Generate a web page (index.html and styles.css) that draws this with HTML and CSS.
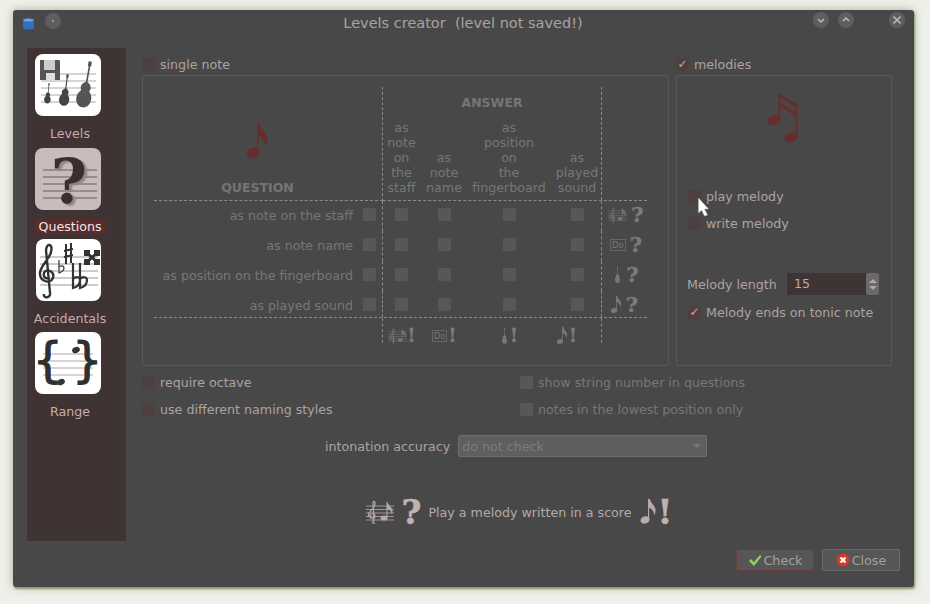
FILE: index.html
```html
<!DOCTYPE html>
<html>
<head>
  <meta charset="UTF-8">
  <title>Levels creator</title>
  <link rel="stylesheet" href="styles.css">
</head>
<body>
  <!-- Shared music symbols -->
  <svg class="defs" width="0" height="0">
    <symbol id="note" viewBox="0 0 22 36">
      <ellipse cx="7" cy="29" rx="6.5" ry="5" transform="rotate(-20 7 29)"/>
      <path d="M11 28V0h2.5c1 6 8 9 8 16 0 3-1 5-2 6 0-5-3-8-7-10V28z"/>
    </symbol>
    <symbol id="beam" viewBox="0 0 32 52">
      <ellipse cx="7" cy="28" rx="7" ry="5" transform="rotate(-20 7 28)"/>
      <ellipse cx="24" cy="46" rx="7" ry="5" transform="rotate(-20 24 46)"/>
      <path d="M11 27V0l20 12v33h-2V24L13 14v13zM13 5v5l16 10v-5z"/>
    </symbol>
    <symbol id="score" viewBox="0 0 28 24">
      <path d="M0 6h28M0 9.500h28M0 13h28M0 16.500h28M0 20h28" stroke="currentColor" stroke-width=".8" fill="none"/>
      <path d="M9 23c-3 1-3-2-1-2M8 21L7 2c2-2 3 2 1 5L3 13c-2 4 4 7 6 4 1-3-4-5-5-1" stroke="currentColor" stroke-width="1.200" fill="none"/>
      <ellipse cx="18" cy="18" rx="3.500" ry="2.500"/>
      <path d="M20.500 18V2h1c1 4 5 5 5 9 0 2-.5 3-1 3 0-3-2-5-4-5v9z"/>
    </symbol>
    <symbol id="guitar" viewBox="0 0 12 30">
      <path d="M5 0h2v3h-.5v9.500c1.500 1 2.500 2 2.500 3.500 0 1-.5 1.500-.5 2 1 1 2 2.500 2 4.500C10.500 26 8.500 28 6 28s-4.500-2-4.500-5.500c0-2 1-3.500 2-4.500 0-.5-.5-1-.5-2 0-1.500 1-2.500 2.500-3.500V3H5z"/>
    </symbol>
  </svg>

  <div class="window">
    <div class="titlebar">
      <div class="title-left">
        <svg class="app-icon" viewBox="0 0 11 12"><path d="M0 2c0-2 11-2 11 0v8c0 2-11 2-11 0z" fill="#2f6fc4"/><ellipse cx="5.500" cy="2" rx="5" ry="1.500" fill="#6aa3e6"/></svg>
        <span class="round-btn menu-btn"><i class="dot"></i></span>
      </div>
      <div class="title">Levels creator&nbsp; (level not saved!)</div>
      <div class="title-right">
        <span class="round-btn"><svg viewBox="0 0 16 16"><path d="M5 7l3 3 3-3" /></svg></span>
        <span class="round-btn"><svg viewBox="0 0 16 16"><path d="M5 9l3-3 3 3" /></svg></span>
        <span class="round-btn close-btn"><svg viewBox="0 0 16 16"><path d="M4.500 4.500l7 7M11.500 4.500l-7 7" /></svg></span>
      </div>
    </div>

    <div class="content">
      <!-- Navigation -->
      <div class="sidebar">
        <div class="nav-item">
          <div class="nav-card">
            <svg class="nav-icon" viewBox="0 0 66 62">
              <rect width="66" height="62" rx="8" fill="#fff"/>
              <path d="M6 20h55M6 27h55M6 34h55M6 41h55M6 48h55" stroke="#aaa" fill="none"/>
              <path d="M5 6h19l1 1v19H5z" fill="#555"/>
              <rect x="9" y="6" width="11" height="10" fill="#ccc"/>
              <rect x="11" y="19" width="9" height="7" fill="#ddd"/>
              <g transform="rotate(6 13 40)"><use href="#guitar" x="7" y="29" width="12" height="22" fill="#444"/></g>
              <g transform="rotate(8 30 36)"><use href="#guitar" x="22" y="20" width="17" height="34" fill="#444"/></g>
              <g transform="rotate(10 51 32)"><use href="#guitar" x="39" y="7" width="24" height="50" fill="#555"/></g>
            </svg>
          </div>
          <span class="nav-label">Levels</span>
        </div>
        <div class="nav-item active">
          <div class="nav-card">
            <svg class="nav-icon" viewBox="0 0 66 62">
              <rect width="66" height="62" rx="8" fill="#c9bcbc"/>
              <path d="M8 22h54M8 29h54M8 36h54M8 43h54M8 50h54" stroke="#6b5f5f" fill="none"/>
            </svg>
            <span class="nav-q">?</span>
          </div>
          <span class="nav-label">Questions</span>
        </div>
        <div class="nav-item">
          <div class="nav-card">
            <svg class="nav-icon" viewBox="0 0 66 62">
              <rect x="1" width="65" height="62" rx="8" fill="#fff"/>
              <path d="M5 18h58M5 25h58M5 32h58M5 39h58M5 46h58" stroke="#999" fill="none"/>
              <!-- clef -->
              <path d="M15 54c1 5-7 6-6 1M15 54L11 11c1-8 7-6 5 2-1 6-9 12-11 20-1 9 10 13 13 6 2-7-7-10-9-5-1 4 2 6 4 5" stroke="#333" stroke-width="2.400" fill="none"/>
              <!-- flat, sharp, double flat -->
              <path d="M24 21v13c3-1 5-3 5-5 0-2-3-3-5-1" stroke="#444" stroke-width="1.300" fill="none"/>
              <path d="M31 5v20M36 4v20M29 12l9-2M29 18l9-2" stroke="#333" stroke-width="2" fill="none"/>
              <path d="M38 24v25c4-1 7-4 7-8 0-3-4-4-7-1M45 24v25c4-1 7-4 7-8 0-3-4-4-7-1" stroke="#333" stroke-width="2.200" fill="none"/>
              <!-- double sharp -->
              <path d="M52 14l10 9M62 14l-10 9" stroke="#333" stroke-width="3" fill="none"/>
              <path d="M49 11h6v6h-6zM59 11h6v6h-6zM49 20h6v6h-6zM59 20h6v6h-6z" fill="#333"/>
            </svg>
          </div>
          <span class="nav-label">Accidentals</span>
        </div>
        <div class="nav-item">
          <div class="nav-card">
            <svg class="nav-icon" viewBox="0 0 66 62">
              <rect width="66" height="62" rx="8" fill="#fff"/>
              <path d="M8 22h50M8 29h50M8 36h50M8 43h50" stroke="#aaa" fill="none"/>
              <ellipse cx="41" cy="18" rx="4" ry="3" fill="#333" transform="rotate(-25 41 18)"/>
              <ellipse cx="26" cy="50" rx="4" ry="3" fill="#333" transform="rotate(-25 26 50)"/>
            </svg>
            <span class="brace brace-l">{</span>
            <span class="brace brace-r">}</span>
          </div>
          <span class="nav-label">Range</span>
        </div>
      </div>

      <div class="main">
        <div class="top-row">
          <!-- Single note -->
          <div class="single-col">
            <label class="check head-check"><i class="box"></i>single note</label>
            <div class="group single-group">
              <div class="qa-table">
                <div class="q-head">
                  <svg class="red-note"><use href="#note"/></svg>
                  <b class="head-title">QUESTION</b>
                </div>
                <div class="a-head">
                  <b class="head-title answer-title">ANSWER</b>
                  <div class="a-cols">
                    <span class="a-col c1">as<br>note<br>on<br>the<br>staff</span>
                    <span class="a-col c2">as<br>note<br>name</span>
                    <span class="a-col c3">as<br>position<br>on<br>the<br>fingerboard</span>
                    <span class="a-col c4">as<br>played<br>sound</span>
                  </div>
                </div>

                <div class="qa-row">
                  <span class="row-label">as note on the staff</span>
                  <i class="box off q-box"></i>
                  <span class="cell c1"><i class="box off"></i></span>
                  <span class="cell c2"><i class="box off"></i></span>
                  <span class="cell c3"><i class="box off"></i></span>
                  <span class="cell c4"><i class="box off"></i></span>
                  <span class="row-icon"><svg class="i-score"><use href="#score"/></svg><b class="mark">?</b></span>
                </div>
                <div class="qa-row">
                  <span class="row-label">as note name</span>
                  <i class="box off q-box"></i>
                  <span class="cell c1"><i class="box off"></i></span>
                  <span class="cell c2"><i class="box off"></i></span>
                  <span class="cell c3"><i class="box off"></i></span>
                  <span class="cell c4"><i class="box off"></i></span>
                  <span class="row-icon"><span class="do">Do</span><b class="mark">?</b></span>
                </div>
                <div class="qa-row">
                  <span class="row-label">as position on the fingerboard</span>
                  <i class="box off q-box"></i>
                  <span class="cell c1"><i class="box off"></i></span>
                  <span class="cell c2"><i class="box off"></i></span>
                  <span class="cell c3"><i class="box off"></i></span>
                  <span class="cell c4"><i class="box off"></i></span>
                  <span class="row-icon"><svg class="i-guitar"><use href="#guitar"/></svg><b class="mark">?</b></span>
                </div>
                <div class="qa-row last-row">
                  <span class="row-label">as played sound</span>
                  <i class="box off q-box"></i>
                  <span class="cell c1"><i class="box off"></i></span>
                  <span class="cell c2"><i class="box off"></i></span>
                  <span class="cell c3"><i class="box off"></i></span>
                  <span class="cell c4"><i class="box off"></i></span>
                  <span class="row-icon sound-icon"><svg class="i-note"><use href="#note"/></svg><b class="mark">?</b></span>
                </div>

                <div class="qa-foot">
                  <span class="cell c1"><svg class="i-score"><use href="#score"/></svg><b class="mark small">!</b></span>
                  <span class="cell c2"><span class="do">Do</span><b class="mark small">!</b></span>
                  <span class="cell c3"><svg class="i-guitar"><use href="#guitar"/></svg><b class="mark small">!</b></span>
                  <span class="cell c4"><svg class="i-note"><use href="#note"/></svg><b class="mark small">!</b></span>
                </div>
              </div>
            </div>
          </div>

          <!-- Melodies -->
          <div class="melody-col">
            <label class="check head-check"><i class="box"><em>✓</em></i>melodies</label>
            <div class="group melody-group">
              <svg class="red-beam"><use href="#beam"/></svg>
              <label class="check play"><i class="box"></i>play melody</label>
              <label class="check write"><i class="box"></i>write melody</label>
              <div class="length-row">
                <span>Melody length</span>
                <div class="spin">
                  <span class="spin-val">15</span>
                  <span class="spin-btns"><i class="up"></i><i class="down"></i></span>
                </div>
              </div>
              <label class="check ends"><i class="box"><em>✓</em></i>Melody ends on tonic note</label>
            </div>
          </div>
        </div>

        <div class="options">
          <label class="check"><i class="box"></i>require octave</label>
          <label class="check disabled"><i class="box off"></i>show string number in questions</label>
          <label class="check"><i class="box"></i>use different naming styles</label>
          <label class="check disabled"><i class="box off"></i>notes in the lowest position only</label>
        </div>

        <div class="accuracy">
          <span>intonation accuracy</span>
          <div class="combo"><span>do not check</span><i class="combo-arrow"></i></div>
        </div>

        <div class="summary">
          <svg class="sum-score"><use href="#score"/></svg>
          <b class="sum-mark q">?</b>
          <span class="sum-text">Play a melody written in a score</span>
          <svg class="sum-note"><use href="#note"/></svg>
          <b class="sum-mark ex">!</b>
        </div>

        <div class="buttons">
          <button class="btn default">
            <svg viewBox="0 0 14 14"><path d="M1 8l2-2 3 3 6-7 1.500 1.500L6 13z" fill="#8fcf5a"/></svg>Check
          </button>
          <button class="btn">
            <svg viewBox="0 0 14 14"><circle cx="7" cy="7" r="6.500" fill="#d33a2c"/><path d="M4.500 4.500l5 5M9.500 4.500l-5 5" stroke="#fff" stroke-width="2.200"/></svg>Close
          </button>
        </div>
      </div>
    </div>
  </div>

  <!-- Mouse pointer over the window -->
  <svg class="cursor" viewBox="0 0 12 20"><path d="M1 1v15l3-3 3 6 3-1-3-6h4z" fill="#fff" stroke="#bbb" stroke-width=".5"/></svg>
</body>
</html>
```

FILE: styles.css
```css
/* Dark window on a pale desktop */
body {
  margin: 0;
  height: 604px;
  box-sizing: border-box;
  padding: 10px 16px 17px 13px;
  background-color: #eef0ea;
  font-family: "DejaVu Sans", sans-serif;
  font-size: 12.650px;
  color: #aea2a2;
  overflow: hidden;
}
i, em, b {
  font-style: normal;
}
.defs {
  position: absolute;
}
.window {
  height: 577px;
  background-color: #484848;
  border-radius: 3px;
  box-shadow: 1px 2px 2px #8d9a70, 0 0 10px #a9b596;
}

/* Title bar */
.titlebar {
  height: 38px;
  display: flex;
  align-items: flex-start;
  padding-top: 2px;
  box-sizing: border-box;
  position: relative;
}
.title-left {
  display: flex;
  align-items: center;
  padding-left: 10px;
  gap: 11px;
}
.app-icon {
  width: 11px;
  height: 12px;
  margin-top: 6px;
}
.round-btn {
  width: 16px;
  height: 16px;
  border-radius: 50%;
  background-color: #5e5e5e;
  display: block;
}
.round-btn svg {
  display: block;
  fill: none;
  stroke: #c4b8b8;
  stroke-width: 1.500;
}
.menu-btn {
  display: flex;
  align-items: center;
  justify-content: center;
}
.dot {
  width: 2px;
  height: 2px;
  background-color: #999;
}
.title {
  flex: 1;
  text-align: center;
  font-size: 14.500px;
  line-height: 18px;
  color: #aaa2a2;
  padding: 2px 0 0 52px;
}
.title-right {
  display: flex;
  gap: 9px;
  padding-right: 9px;
}
.close-btn {
  margin-left: 26px;
}

/* Layout below the title bar */
.content {
  display: flex;
  padding-left: 14px;
}
.sidebar {
  width: 99px;
  height: 493px;
  flex-shrink: 0;
  background-color: #3f3333;
  padding-top: 6px;
  box-sizing: border-box;
  display: flex;
  flex-direction: column;
  gap: 5px;
  align-items: flex-start;
}
.nav-item {
  width: 86px;
  display: flex;
  flex-direction: column;
  align-items: center;
}
.nav-card {
  position: relative;
  width: 66px;
  height: 62px;
  margin-right: 5px;
}
.nav-icon {
  width: 66px;
  height: 62px;
  display: block;
}
.nav-label {
  margin-top: 10px;
  line-height: 16px;
  color: #c8aaaa;
}
.active {
  margin-top: 1px;
}
.active .nav-label {
  margin-top: 9px;
  line-height: 15px;
  background-color: #5c2b2b;
  color: #efe6e6;
  width: 70px;
  text-align: center;
}
.nav-q {
  position: absolute;
  left: 3px;
  right: 0;
  top: 3px;
  text-align: center;
  font-family: "DejaVu Serif", serif;
  font-weight: bold;
  font-size: 62px;
  line-height: 62px;
  color: #3a2e2e;
  text-shadow: 3px 2px 2px #8f8383;
}
.brace {
  position: absolute;
  top: -3px;
  font-size: 48px;
  line-height: 62px;
  color: #2f2f2f;
  -webkit-text-stroke: 1px #2f2f2f;
}
.brace-l {
  left: -2px;
}
.brace-r {
  right: -2px;
}

/* Main area */
.main {
  width: 758px;
  margin-left: 16px;
  padding-top: 7px;
}
.top-row {
  display: flex;
  gap: 7px;
}
.check {
  display: flex;
  align-items: center;
  gap: 5px;
  line-height: 15px;
}
.box {
  width: 13px;
  height: 13px;
  background-color: #4c4040;
  flex-shrink: 0;
  display: flex;
  align-items: center;
  justify-content: center;
}
.box em {
  color: #c9a9a9;
  font-size: 12px;
  font-weight: bold;
  line-height: 13px;
}
.box.off {
  background-color: #575757;
}
.head-check {
  height: 18px;
  margin-bottom: 2px;
}
.group {
  border: 1px solid #595959;
  border-radius: 2px;
  box-sizing: border-box;
  height: 291px;
}
.single-col {
  width: 527px;
}
.melody-col {
  width: 216px;
}
.disabled {
  color: #777;
}

/* Question / answer table */
.qa-table {
  display: grid;
  grid-template-columns: 229px 218px 46px;
  grid-template-rows: 114px 30px 30px 30px 26px 26px;
  margin: 11px 0 0 11px;
  width: 493px;
  color: #777;
}
.q-head {
  border-right: 1px dashed #8a8a8a;
  border-bottom: 1px dashed #8a8a8a;
  position: relative;
  display: flex;
  flex-direction: column;
  align-items: center;
  justify-content: flex-end;
  padding-right: 21px;
}
.head-title {
  color: #757575;
  font-size: 12.500px;
  line-height: 15px;
}
.q-head .head-title {
  margin-bottom: 5px;
}
.red-note {
  position: absolute;
  left: 92px;
  top: 37px;
  width: 22px;
  height: 36px;
  fill: #682c2c;
}
.a-head {
  grid-column: 2 / 4;
  border-bottom: 1px dashed #8a8a8a;
  position: relative;
}
.a-head::after {
  content: "";
  position: absolute;
  left: 218px;
  top: 0;
  bottom: 0;
  border-left: 1px dashed #8a8a8a;
}
.answer-title {
  display: block;
  width: 218px;
  text-align: center;
  margin-top: 8px;
}
.a-cols {
  position: absolute;
  left: 0;
  bottom: 5px;
  width: 221px;
  display: flex;
  align-items: flex-end;
}
.a-col {
  text-align: center;
  line-height: 15px;
}
.c1 {
  width: 37px;
}
.c2 {
  width: 48px;
}
.c3 {
  width: 82px;
}
.c4 {
  width: 54px;
}
.qa-row {
  grid-column: 1 / 4;
  display: grid;
  grid-template-columns: 199px 30px 37px 48px 82px 51px 46px;
  align-items: center;
  height: 30px;
  position: relative;
}
.qa-row::after {
  content: "";
  position: absolute;
  left: 228px;
  top: 0;
  bottom: 0;
  border-left: 1px dashed #8a8a8a;
}
.qa-row::before {
  content: "";
  position: absolute;
  left: 447px;
  top: 0;
  bottom: 0;
  border-left: 1px dashed #8a8a8a;
}
.last-row::after,
.last-row::before {
  bottom: 4px;
}
.row-label {
  text-align: right;
  margin-bottom: 2px;
  white-space: nowrap;
}
.q-box {
  margin: 0 0 4px 10px;
}
.cell {
  display: flex;
  align-items: center;
  justify-content: center;
  width: auto;
}
.qa-row .cell {
  margin-bottom: 4px;
}
.qa-row .c4 {
  padding-left: 3px;
}
.row-icon {
  display: flex;
  align-items: center;
  justify-content: center;
  gap: 4px;
  color: #777;
  fill: #777;
  margin-bottom: 2px;
  padding-left: 4px;
}
.sound-icon {
  padding-left: 0;
}
.mark {
  font-family: "DejaVu Serif", serif;
  font-size: 21px;
  line-height: 20px;
  color: #7c7c7c;
  -webkit-text-stroke: .4px #7c7c7c;
}
.mark.small {
  font-size: 18px;
}
.i-score {
  width: 19px;
  height: 16px;
}
.i-guitar {
  width: 9px;
  height: 17px;
}
.i-note {
  width: 12px;
  height: 18px;
}
.do {
  border: 1px solid #666;
  font-size: 8.500px;
  line-height: 10px;
  padding: 0 1px;
  color: #777;
}
.qa-foot {
  grid-column: 1 / 4;
  display: grid;
  grid-template-columns: 229px 37px 48px 82px 51px;
  grid-template-rows: 26px;
  border-top: 1px dashed #8a8a8a;
  fill: #777;
  color: #777;
  position: relative;
}
.qa-foot::before {
  content: "";
  position: absolute;
  left: 228px;
  top: 0;
  bottom: 0;
  border-left: 1px dashed #8a8a8a;
}
.qa-foot::after {
  content: "";
  position: absolute;
  left: 447px;
  top: 0;
  bottom: 0;
  border-left: 1px dashed #8a8a8a;
}
.qa-foot .c1 {
  grid-column: 2;
}
.qa-foot .cell {
  padding-top: 10px;
  gap: 1px;
  width: auto;
}
.qa-foot .c4 {
  padding-right: 18px;
}

/* Melodies box */
.melody-group {
  padding: 17px 11px 0 11px;
  display: flex;
  flex-direction: column;
  position: relative;
}
.red-beam {
  width: 32px;
  height: 50px;
  fill: #682c2c;
  align-self: center;
  margin-left: -2px;
}
.play {
  margin-top: 46px;
}
.write {
  margin-top: 12px;
}
.length-row {
  display: flex;
  align-items: center;
  justify-content: space-between;
  white-space: nowrap;
  margin: 42px 1px 0 -1px;
  height: 22px;
}
.spin {
  width: 92px;
  height: 22px;
  background-color: #3f3333;
  border-radius: 2px;
  display: flex;
  color: #c8aaaa;
}
.spin-val {
  flex: 1;
  line-height: 22px;
  padding-left: 7px;
}
.spin-btns {
  width: 13px;
  background-color: #6a6a6a;
  border-radius: 2px;
  display: flex;
  flex-direction: column;
  align-items: center;
  justify-content: center;
  gap: 3px;
}
.up {
  border: 4px solid transparent;
  border-top: 0;
  border-bottom: 4px solid #b0a8a8;
}
.down {
  border: 4px solid transparent;
  border-bottom: 0;
  border-top: 4px solid #b0a8a8;
}
.ends {
  margin-top: 10px;
}

/* Options under the boxes */
.options {
  display: grid;
  grid-template-columns: 378px 1fr;
  row-gap: 12px;
  margin-top: 9px;
}
.accuracy {
  display: flex;
  align-items: center;
  gap: 8px;
  margin: 18px 0 0 183px;
  height: 22px;
}
.combo {
  width: 249px;
  height: 22px;
  box-sizing: border-box;
  background-color: #5f5f5f;
  border: 1px solid #6e6e6e;
  border-radius: 2px;
  display: flex;
  align-items: center;
  justify-content: space-between;
  padding: 0 5px 0 3px;
  color: #7c7c7c;
}
.combo-arrow {
  border: 4px solid transparent;
  border-bottom: 0;
  border-top: 4px solid #777;
}

/* Level summary line */
.summary {
  display: flex;
  align-items: center;
  justify-content: center;
  height: 36px;
  margin-top: 37px;
  padding-right: 4px;
  color: #b5a8a8;
  fill: #b8aaaa;
}
.sum-score {
  width: 28px;
  height: 24px;
}
.sum-mark {
  font-family: "DejaVu Serif", serif;
  font-size: 34px;
  line-height: 32px;
  color: #c0b2b2;
  -webkit-text-stroke: .6px #c0b2b2;
}
.sum-mark.q {
  margin: 0 7px 0 8px;
}
.sum-text {
  margin-right: 8px;
}
.sum-note {
  width: 16px;
  height: 26px;
  margin-right: 2px;
}
.buttons {
  display: flex;
  justify-content: flex-end;
  gap: 8px;
  margin-top: 19px;
}
.btn {
  width: 78px;
  height: 22px;
  padding: 0;
  background-color: #565656;
  border: 1px solid #6a6a6a;
  border-radius: 2px;
  color: #a8a0a0;
  font-family: "DejaVu Sans", sans-serif;
  font-size: 12.650px;
  display: flex;
  align-items: center;
  justify-content: center;
  gap: 2px;
}
.btn.default {
  border-color: #6b3d3d;
}
.btn svg {
  width: 14px;
  height: 14px;
}

/* Pointer */
.cursor {
  position: absolute;
  left: 697px;
  top: 197px;
  width: 13px;
  height: 20px;
}
```
